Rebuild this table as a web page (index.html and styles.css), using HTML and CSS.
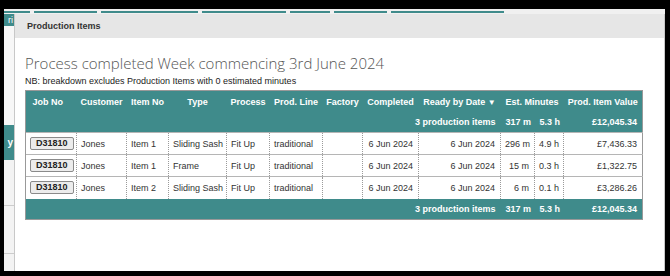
FILE: index.html
```html
<!DOCTYPE html>
<html>
<head>
<meta charset="utf-8">
<link rel="stylesheet" href="styles.css">
</head>
<body>
<div class="frame">
  <div class="screen">
    <div class="tabs">
      <span class="tab t1"></span><span class="tab t2"></span><span class="tab t3"></span><span class="tab t4"></span><span class="tab t5"></span><span class="tab t6"></span><span class="tab t7"></span><span class="tab t8"></span>
    </div>
    <div class="main">
      <aside class="side">
        <div class="side-item top">ri</div>
        <div class="side-gap"></div>
        <div class="side-item big">y</div>
        <div class="side-line l1"></div>
        <div class="side-line l2"></div>
      </aside>
      <section class="modal">
        <header class="modal-head">Production Items</header>
        <div class="modal-body">
          <h1 class="title">Process completed Week commencing 3rd June 2024</h1>
          <p class="nb">NB: breakdown excludes Production Items with 0 estimated minutes</p>
          <table class="grid">
            <colgroup>
              <col class="c-job"><col class="c-cust"><col class="c-item"><col class="c-type"><col class="c-proc"><col class="c-line"><col class="c-fact"><col class="c-comp"><col class="c-ready"><col class="c-min"><col class="c-hr"><col class="c-val">
            </colgroup>
            <thead>
              <tr class="head">
                <th class="th-job">Job No</th><th>Customer</th><th>Item No</th><th>Type</th><th>Process</th><th>Prod. Line</th><th>Factory</th><th>Completed</th><th>Ready by Date <span class="arrow">▼</span></th><th colspan="2">Est. Minutes</th><th>Prod. Item Value</th>
              </tr>
              <tr class="total">
                <th colspan="9" class="r">3 production items</th><th class="r">317 m</th><th class="r">5.3 h</th><th class="r">£12,045.34</th>
              </tr>
            </thead>
            <tbody>
              <tr>
                <td class="btn-cell"><span class="btn">D31810</span></td><td>Jones</td><td>Item 1</td><td>Sliding Sash</td><td>Fit Up</td><td>traditional</td><td></td><td class="r">6 Jun 2024</td><td class="r">6 Jun 2024</td><td class="r">296 m</td><td class="r">4.9 h</td><td class="r">£7,436.33</td>
              </tr>
              <tr>
                <td class="btn-cell"><span class="btn">D31810</span></td><td>Jones</td><td>Item 1</td><td>Frame</td><td>Fit Up</td><td>traditional</td><td></td><td class="r">6 Jun 2024</td><td class="r">6 Jun 2024</td><td class="r">15 m</td><td class="r">0.3 h</td><td class="r">£1,322.75</td>
              </tr>
              <tr>
                <td class="btn-cell"><span class="btn">D31810</span></td><td>Jones</td><td>Item 2</td><td>Sliding Sash</td><td>Fit Up</td><td>traditional</td><td></td><td class="r">6 Jun 2024</td><td class="r">6 Jun 2024</td><td class="r">6 m</td><td class="r">0.1 h</td><td class="r">£3,286.26</td>
              </tr>
            </tbody>
            <tfoot>
              <tr class="total foot">
                <th colspan="9" class="r">3 production items</th><th class="r">317 m</th><th class="r">5.3 h</th><th class="r">£12,045.34</th>
              </tr>
            </tfoot>
          </table>
        </div>
      </section>
    </div>
  </div>
</div>
</body>
</html>
```

FILE: styles.css
```css
* { box-sizing: border-box; }
html, body { margin: 0; padding: 0; }
body {
  background: #000;
  width: 670px;
  height: 276px;
  overflow: hidden;
  font-family: "Liberation Sans", Arial, sans-serif;
}
.frame {
  padding: 9px 5px 5px 4px;
  height: 276px;
}
.screen {
  background: #f2f2f2;
  height: 262px;
  display: flex;
  flex-direction: column;
  overflow: hidden;
}
.tabs {
  height: 5px;
  display: flex;
  gap: 4px;
  padding-top: 2px;
  background: #f0f0f0;
}
.tab {
  height: 2px;
  background: #3f8b8b;
}
.t1 { width: 26px; }
.t2 { width: 63px; }
.t3 { width: 97px; }
.t4 { width: 84px; }
.t5 { width: 40px; }
.t6 { width: 53px; }
.t7 { width: 113px; }
.t8 { width: 0; }
.main {
  flex: 1;
  display: flex;
  min-height: 0;
}
.side {
  width: 10px;
  flex: none;
  display: flex;
  flex-direction: column;
  background: #f3f3f3;
}
.side-item {
  background: #3f8b8b;
  color: #fff;
  font-size: 10px;
  font-weight: bold;
  white-space: nowrap;
  display: flex;
  justify-content: flex-end;
  align-items: center;
  padding-right: 1px;
}
.side-item.top { height: 12px; font-weight: normal; font-size: 9px; }
.side-gap { height: 99px; background: #f7f7f7; }
.side-item.big { height: 35px; }
.side-line { height: 1px; background: #ccc; }
.l1 { margin-top: 45px; }
.l2 { margin-top: 47px; }
.modal {
  flex: 1;
  background: #fff;
  border-left: 1px solid #c8c8c8;
  border-right: 1px solid #c8c8c8;
  display: flex;
  flex-direction: column;
}
.modal-head {
  height: 24px;
  background: #e6e6e6;
  color: #333;
  font-weight: bold;
  font-size: 9px;
  padding-left: 12px;
  display: flex;
  align-items: center;
}
.modal-body {
  padding: 15px 10px 0 10px;
}
.title {
  margin: 0;
  font-family: "Open Sans", sans-serif;
  font-weight: 300;
  font-size: 15px;
  line-height: 20px;
  color: #555;
  white-space: nowrap;
}
.nb {
  margin: 2px 0 3px 0;
  font-size: 9px;
  line-height: 12px;
  color: #222;
}
.grid {
  width: 617px;
  table-layout: fixed;
  border-collapse: collapse;
  font-size: 9px;
  border: 1px solid #999;
}
.c-job { width: 51px; }
.c-cust { width: 50px; }
.c-item { width: 42px; }
.c-type { width: 58px; }
.c-proc { width: 43px; }
.c-line { width: 53px; }
.c-fact { width: 40px; }
.c-comp { width: 56px; }
.c-ready { width: 82px; }
.c-min { width: 34px; }
.c-hr { width: 29px; }
.c-val { width: 79px; }
.grid th {
  background: #3f8b8b;
  color: #fff;
  font-weight: bold;
  padding: 0 3px;
  white-space: nowrap;
  overflow: hidden;
}
.head th { height: 22px; text-align: center; }
.th-job { padding-right: 10px !important; }
.arrow { font-size: 8px; }
.total th { height: 20px; padding: 0 5px; }
.foot th { height: 21px; }
.grid .r { text-align: right; }
.grid td {
  height: 22px;
  padding: 0 4px;
  color: #333;
  white-space: nowrap;
  overflow: hidden;
  border-top: 1px solid #b5b5b5;
  border-left: 1px dotted #9a9a9a;
}
.grid td.r { padding-right: 5px; }
.grid td.btn-cell { padding: 0 0 0 4px; border-left: 1px solid #999; }
.btn {
  display: inline-block;
  height: 13px;
  line-height: 11px;
  padding: 0 5px;
  border: 1px solid #8a8a8a;
  border-radius: 2px;
  background: #ececec;
  color: #222;
  font-weight: bold;
  font-size: 9px;
}
```
